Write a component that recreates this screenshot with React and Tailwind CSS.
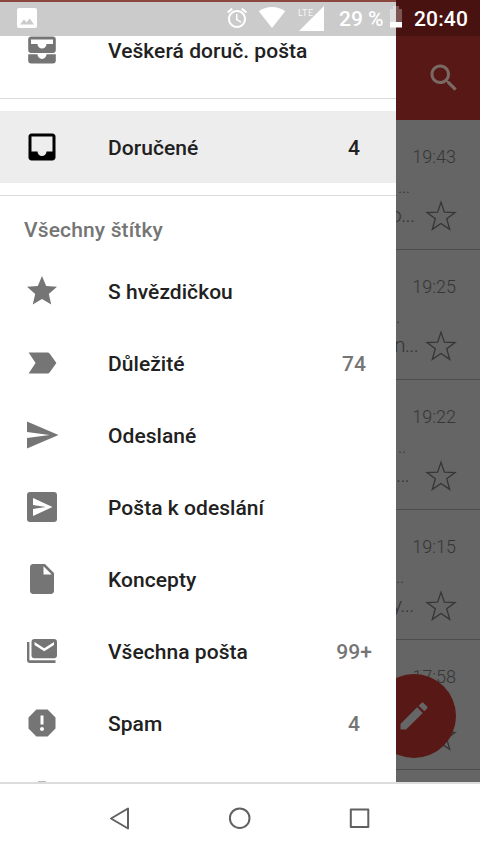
import React from 'react';

const paths = {
  allInbox:
    'M7.2 4.5H28.8Q31.8 4.5 31.8 7.5V18Q31.8 21 28.8 21H7.2Q4.2 21 4.2 18V7.5Q4.2 4.5 7.2 4.5ZM7 7.5V12H13.5A4.5 4.5 0 0 0 22.5 12H29V7.5ZM4.2 22.2H13.5A4.5 4.8 0 0 0 22.5 22.2H31.8V28.5Q31.8 31.5 28.8 31.5H7.2Q4.2 31.5 4.2 28.5Z',
  inbox:
    'M19 3H4.99c-1.11 0-1.98.9-1.98 2L3 19c0 1.1.88 2 1.99 2H19c1.1 0 2-.9 2-2V5c0-1.1-.9-2-2-2zm0 12h-4c0 1.66-1.35 3-3 3s-3-1.34-3-3H4.99V5H19v10z',
  star: 'M12 17.27L18.18 21l-1.64-7.03L22 9.24l-7.19-.61L12 2 9.19 8.63 2 9.24l5.46 4.73L5.82 21z',
  important: 'M3.1 19H15.5c.7 0 1.3-.35 1.7-.9L21.6 12l-4.4-6.1C16.8 5.35 16.2 5 15.5 5H3.1L7.7 12z',
  send: 'M2.01 21L23 12 2.01 3 2 10l15 2-15 2z',
  outbox:
    'M4 2H20Q22 2 22 4V20Q22 22 20 22H4Q2 22 2 20V4Q2 2 4 2ZM6 6V10.6L14.5 12L6 13.4V18L19 12Z',
  draft: 'M6 2c-1.1 0-2 .9-2 2v16c0 1.1.9 2 2 2h12c1.1 0 2-.9 2-2V8l-6-6H6zm7 7V3.5L18.5 9H13z',
  allMail:
    'M7 4H20Q22 4 22 6V14.8Q22 16.8 20 16.8H7Q5 16.8 5 14.8V6Q5 4 7 4ZM7 6V8L13.5 12.2L20 8V6L13.5 10.2ZM2 6H3.6V18.2H21V20H4Q2 20 2 18Z',
  spam: 'M15.73 3H8.27L3 8.27v7.46L8.27 21h7.46L21 15.73V8.27L15.73 3zM12 17.3c-.72 0-1.3-.58-1.3-1.3 0-.72.58-1.3 1.3-1.3.72 0 1.3.58 1.3 1.3 0 .72-.58 1.3-1.3 1.3zm1-4.3h-2V7h2v6z',
  trash: 'M6 19c0 1.1.9 2 2 2h8c1.1 0 2-.9 2-2V7H6v12zM19 4h-3.5l-1-1h-5l-1 1H5v2h14V4z',
};

function Glyph({ name }) {
  const box = name === 'allInbox' ? '0 0 36 36' : '0 0 24 24';
  return (
    <svg className="size-9 shrink-0" viewBox={box} fill="currentColor" fillRule="evenodd">
      <path d={paths[name]} />
    </svg>
  );
}

function Item({ icon, label, count, active }) {
  return (
    <div className={active ? 'flex h-[72px] shrink-0 items-center bg-[#ededed] pl-6 pr-3' : 'flex h-[72px] shrink-0 items-center pl-6 pr-3'}>
      <span className={active ? 'flex text-black' : 'flex text-[#757575]'}>
        <Glyph name={icon} />
      </span>
      <span className="ml-12 flex-1 whitespace-nowrap pt-0.5 text-[#212121]">{label}</span>
      <span className={active ? 'w-[60px] pt-0.5 text-center font-medium text-[#212121]' : 'w-[60px] pt-0.5 text-center text-[#757575]'}>
        {count}
      </span>
    </div>
  );
}

const labels = [
  ['star', 'S hvězdičkou', ''],
  ['important', 'Důležité', '74'],
  ['send', 'Odeslané', ''],
  ['outbox', 'Pošta k odeslání', ''],
  ['draft', 'Koncepty', ''],
  ['allMail', 'Všechna pošta', '99+'],
  ['spam', 'Spam', '4'],
  ['trash', '', ''],
];

const mails = [
  { time: '19:43', subject: '...', snippet: 'o...', subjectPad: 'ml-0.5', snippetPad: '-ml-1.5' },
  { time: '19:25', subject: '.', snippet: 'n...', subjectPad: '', snippetPad: '-ml-0.5' },
  { time: '19:22', subject: '..', snippet: '...', subjectPad: 'ml-0.5', snippetPad: '' },
  { time: '19:15', subject: '..', snippet: 'y...', subjectPad: '', snippetPad: '-ml-1' },
  { time: '17:58', subject: '', snippet: '', subjectPad: '', snippetPad: '' },
];

function Mail({ mail }) {
  return (
    <div className="flex h-[130px] shrink-0 flex-col border-b border-[#4d4d4d] text-[#363636]">
      <div className="mt-[25px] h-6 pr-6 text-right text-[18px] font-light leading-6">{mail.time}</div>
      <div className="mb-px mt-2 h-5 text-[18px] font-light leading-5 tracking-[-0.4px]">
        <span className={mail.subjectPad}>{mail.subject}</span>
      </div>
      <div className="flex h-9 items-center justify-between pr-[21px]">
        <span className={`${mail.snippetPad} -mt-0.5 text-[21px] font-light leading-6 tracking-[-0.6px]`}>{mail.snippet}</span>
        <svg className="size-9" viewBox="0 0 36 36" fill="none" stroke="currentColor" strokeWidth="1.3">
          <path d="M18 4.2L21.4 14.1L32 14.6L23.7 20.8L26.7 31.4L18 25.5L9.3 31.4L12.3 20.8L4 14.6L14.6 14.1Z" />
        </svg>
      </div>
    </div>
  );
}

function StatusBar() {
  return (
    <div className="absolute inset-x-0 top-0 flex h-9 text-white">
      <div className="flex h-9 w-[396px] items-start border-t-2 border-[#8c463d] bg-[#cbcbcb]">
        <svg className="ml-4 mt-[5px] size-[22px]" viewBox="0 0 22 22">
          <path fillRule="evenodd" fill="currentColor" d="M3 1H19Q21 1 21 3V19Q21 21 19 21H3Q1 21 1 19V3Q1 1 3 1ZM4 17.5H18L13.8 11.5L10.6 15.5L8 12.5Z" />
        </svg>
        <svg className="ml-[187px] mt-1 size-6" viewBox="0 0 24 24" fill="currentColor">
          <path d="M22 5.72l-4.6-3.86-1.29 1.53 4.6 3.86L22 5.72zM7.88 3.39L6.6 1.86 2 5.71l1.29 1.53 4.59-3.85zM12.5 8H11v6l4.75 2.85.75-1.23-4-2.37V8zM12 4c-4.97 0-9 4.03-9 9s4.02 9 9 9c4.97 0 9-4.03 9-9s-4.03-9-9-9zm0 16c-3.87 0-7-3.13-7-7s3.13-7 7-7 7 3.13 7 7-3.13 7-7 7z" />
        </svg>
        <svg className="ml-[9px] mt-1 h-[23px] w-[28px]" viewBox="0 0 28 23" fill="currentColor">
          <path d="M.8 5.2Q14-3 27.2 5.2L14 22Z" />
        </svg>
        <svg className="ml-[12px] mt-[3px] h-[27px] w-[28px]" viewBox="0 0 28 27" fill="currentColor">
          <path d="M26 1V26H1Z" />
          <text x="0" y="11" fontSize="9" fontFamily="Roboto, sans-serif" opacity=".85" textLength="15">LTE</text>
        </svg>
        <span className="ml-[13px] mt-[5px] whitespace-nowrap text-[21px] font-medium leading-6">29 %</span>
      </div>
      <div className="h-9 w-[84px] bg-[#47120f] pl-[18px] pt-[7px] text-[21px] font-medium leading-6 tracking-[0.15px]">20:40</div>
      <svg className="absolute left-[390px] top-[5px] h-[23px] w-3" viewBox="0 0 12 23">
        <path d="M3 1H6V17H0V4H3Z" fill="#dedede" />
        <path d="M6 1H9V4H12V17H6Z" fill="#7d5452" />
        <path d="M0 17H12V22.5H0Z" fill="#fff" />
      </svg>
    </div>
  );
}

export default function App() {
  return (
    <div className="relative flex h-[854px] w-[480px] flex-col overflow-hidden bg-white font-['Roboto','Noto_Sans',sans-serif]">
      <div className="flex h-[782px] overflow-hidden">
        <nav className="flex w-[396px] shrink-0 flex-col overflow-hidden bg-white pt-[14px] text-[21px] font-[480] leading-6 tracking-[0.05px]">
          <Item icon="allInbox" label="Veškerá doruč. pošta" count="" />
          <div className="mb-3 mt-3 h-px shrink-0 bg-[#dcdcdc]" />
          <Item icon="inbox" label="Doručené" count="4" active />
          <div className="mt-3 h-px shrink-0 bg-[#dcdcdc]" />
          <div className="h-[59px] shrink-0 pl-6 pt-[22px] tracking-[0.15px] text-[#757575]">Všechny štítky</div>
          {labels.map(([icon, label, count]) => (
            <Item key={icon} icon={icon} label={label} count={count} />
          ))}
        </nav>
        <main className="relative flex w-[84px] shrink-0 flex-col overflow-hidden bg-[#656565]">
          <header className="flex h-[120px] shrink-0 items-end bg-[#581916] pb-6 pl-[30px] text-[#7a6a64]">
            <svg className="size-9" viewBox="0 0 24 24" fill="currentColor">
              <path d="M15.5 14h-.79l-.28-.27C15.41 12.59 16 11.11 16 9.5 16 5.91 13.09 3 9.5 3S3 5.91 3 9.5 5.91 16 9.5 16c1.61 0 3.09-.59 4.23-1.57l.27.28v.79l5 4.99L20.49 19l-4.99-5zm-6 0C7.01 14 5 11.99 5 9.5S7.01 5 9.5 5 14 7.01 14 9.5 11.99 14 9.5 14z" />
            </svg>
          </header>
          {mails.map((mail) => (
            <Mail key={mail.time} mail={mail} />
          ))}
          <button className="absolute left-[-24px] top-[674px] flex size-[84px] items-center justify-center rounded-full bg-[#581916] text-[#666]">
            <svg className="size-9" viewBox="0 0 24 24" fill="currentColor">
              <path d="M3 17.25V21h3.75L17.81 9.94l-3.75-3.75L3 17.25zM20.71 7.04c.39-.39.39-1.02 0-1.41l-2.34-2.34c-.39-.39-1.02-.39-1.41 0l-1.83 1.83 3.75 3.75 1.83-1.83z" />
            </svg>
          </button>
        </main>
      </div>
      <StatusBar />
      <footer className="flex h-[72px] items-center justify-center gap-[84px] border-t-2 border-[#dcdcdc] bg-white text-[#606060]">
        <svg className="size-9" viewBox="0 0 36 36" fill="none" stroke="currentColor" strokeWidth="2" strokeLinejoin="round">
          <path d="M26 7.5V27.5L9 17.5Z" />
        </svg>
        <svg className="size-9" viewBox="0 0 36 36" fill="none" stroke="currentColor" strokeWidth="2">
          <circle cx="17.7" cy="17.2" r="9.8" />
        </svg>
        <svg className="size-9" viewBox="0 0 36 36" fill="none" stroke="currentColor" strokeWidth="2" strokeLinejoin="round">
          <rect x="8.8" y="8.5" width="17.5" height="17.5" />
        </svg>
      </footer>
    </div>
  );
}
